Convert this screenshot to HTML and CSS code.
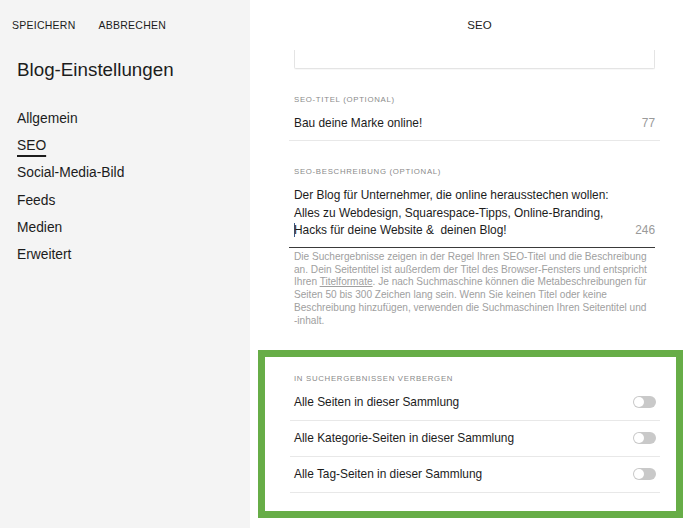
FILE: index.html
```
<!DOCTYPE html>
<html lang="de">
<head>
<meta charset="utf-8">
<title>Blog-Einstellungen – SEO</title>
<link rel="stylesheet" href="styles.css">
</head>
<body>
<div class="app">
  <aside class="sidebar">
    <div class="actions">
      <span class="action">SPEICHERN</span>
      <span class="action">ABBRECHEN</span>
    </div>
    <h1 class="title">Blog-Einstellungen</h1>
    <nav class="nav">
      <a class="nav-item">Allgemein</a>
      <a class="nav-item active">SEO</a>
      <a class="nav-item">Social-Media-Bild</a>
      <a class="nav-item">Feeds</a>
      <a class="nav-item">Medien</a>
      <a class="nav-item">Erweitert</a>
    </nav>
  </aside>
  <main class="main">
    <header class="main-header">SEO</header>
    <div class="clipped-box"></div>

    <div class="label label-first">SEO-TITEL (OPTIONAL)</div>
    <div class="field">
      <span class="field-value">Bau deine Marke online!</span>
      <span class="count">77</span>
    </div>

    <div class="label">SEO-BESCHREIBUNG (OPTIONAL)</div>
    <div class="field field-multi">
      <div class="field-value">Der Blog für Unternehmer, die online herausstechen wollen:<br>Alles zu Webdesign, Squarespace-Tipps, Online-Branding,<br><span class="caret"></span>Hacks für deine Website &amp;&nbsp; deinen Blog!</div>
      <span class="count">246</span>
    </div>
    <p class="help">Die Suchergebnisse zeigen in der Regel Ihren SEO-Titel und die Beschreibung an. Dein Seitentitel ist außerdem der Titel des Browser-Fensters und entspricht Ihren <span class="link">Titelformate</span>. Je nach Suchmaschine können die Metabeschreibungen für Seiten 50 bis 300 Zeichen lang sein. Wenn Sie keinen Titel oder keine Beschreibung hinzufügen, verwenden die Suchmaschinen Ihren Seitentitel und <span class="nowrap">-inhalt.</span></p>

    <section class="highlight">
      <div class="label label-hl">IN SUCHERGEBNISSEN VERBERGEN</div>
      <div class="toggle-row">
        <span>Alle Seiten in dieser Sammlung</span>
        <span class="toggle"></span>
      </div>
      <div class="toggle-row">
        <span>Alle Kategorie-Seiten in dieser Sammlung</span>
        <span class="toggle"></span>
      </div>
      <div class="toggle-row">
        <span>Alle Tag-Seiten in dieser Sammlung</span>
        <span class="toggle"></span>
      </div>
    </section>
  </main>
</div>
</body>
</html>
```
FILE: styles.css
```
* { box-sizing: border-box; }
html, body { margin: 0; padding: 0; }
body {
  font-family: "Liberation Sans", Arial, sans-serif;
  color: #1c1c1c;
  background: #fff;
  width: 700px;
  height: 528px;
  overflow: hidden;
}
.app {
  display: flex;
  height: 528px;
}
.sidebar {
  width: 250px;
  flex: none;
  background: #f4f4f4;
  padding-left: 17px;
}
.actions {
  display: flex;
  gap: 23px;
  margin-left: -5px;
  height: 50px;
  align-items: center;
}
.action {
  font-size: 10.5px;
  letter-spacing: 0.25px;
  color: #1c1c1c;
}
.title {
  margin: 0;
  font-weight: normal;
  font-size: 18.8px;
  line-height: 40px;
}
.nav {
  display: flex;
  flex-direction: column;
  margin-top: 15px;
}
.nav-item {
  font-size: 13.8px;
  line-height: 27.2px;
  color: #1c1c1c;
  align-self: flex-start;
}
.nav-item.active {
  text-decoration: underline;
  text-decoration-thickness: 2px;
  text-underline-offset: 5px;
}
.main {
  flex: 1;
  padding: 0 45px 0 44px;
  display: flex;
  flex-direction: column;
}
.main-header {
  height: 50px;
  line-height: 50px;
  text-align: center;
  font-size: 11.5px;
  padding-left: 10px;
}
.clipped-box {
  height: 19px;
  border: 1px solid #e4e4e4;
  border-top: none;
  border-radius: 0 0 2px 2px;
  box-shadow: 0 1px 1px rgba(0,0,0,0.03);
}
.label {
  font-size: 7.8px;
  letter-spacing: 0.7px;
  color: #8a8a8a;
  line-height: 12px;
  margin-top: 25px;
}
.field {
  display: flex;
  justify-content: space-between;
  align-items: center;
  margin: 0 -5px;
  padding: 7px 5px;
  border-bottom: 1px solid #e8e8e8;
  font-size: 11.9px;
  line-height: 20px;
}
.count { color: #9a9a9a; }
.field-multi {
  align-items: flex-end;
  padding: 9px 5px 7px;
  line-height: 17.6px;
  border-bottom: 1px solid #3a3a3a;
  margin-right: 0;
}
.field-multi .count { margin-right: -5px; }
.caret {
  display: inline-block;
  width: 1px;
  height: 14px;
  background: #3a5a8a;
  vertical-align: -3px;
  margin-right: -1px;
}
.help {
  margin: 3px 0 0;
  font-size: 10.1px;
  line-height: 12.8px;
  color: #a0a0a0;
}
.link {
  text-decoration: underline;
  text-underline-offset: 1px;
}
.nowrap { white-space: nowrap; }
.highlight {
  margin: 22px -28px 0 -36px;
  border: 7px solid #67ad47;
  padding: 16px 16px 18px 25px;
}
.label-hl {
  margin-top: 0;
  padding-left: 4px;
}
.toggle-row {
  display: flex;
  justify-content: space-between;
  align-items: center;
  height: 36px;
  padding: 0 4px 1px;
  border-bottom: 1px solid #e8e8e8;
  font-size: 11.9px;
}
.toggle {
  width: 23px;
  height: 12px;
  border-radius: 6px;
  background: #c9c9c9;
  position: relative;
}
.toggle::after {
  content: "";
  position: absolute;
  left: 1px;
  top: 1px;
  width: 10px;
  height: 10px;
  border-radius: 50%;
  background: #fff;
}
```
